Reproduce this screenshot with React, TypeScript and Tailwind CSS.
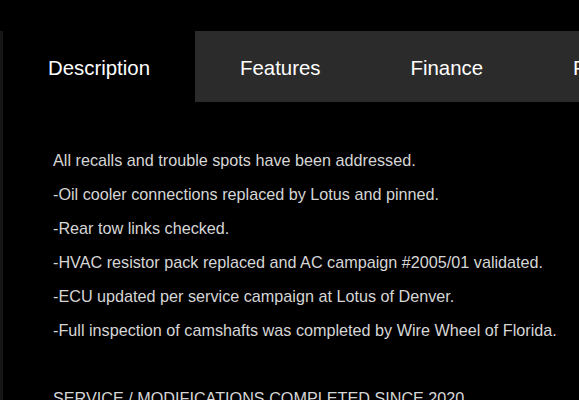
const tabs = ['Description', 'Features', 'Finance', 'FAQ'];

const lines = [
  'All recalls and trouble spots have been addressed.',
  '-Oil cooler connections replaced by Lotus and pinned.',
  '-Rear tow links checked.',
  '-HVAC resistor pack replaced and AC campaign #2005/01 validated.',
  '-ECU updated per service campaign at Lotus of Denver.',
  '-Full inspection of camshafts was completed by Wire Wheel of Florida.',
];

export default function App() {
  return (
    <div className="w-[579px] h-[400px] overflow-hidden bg-black font-['Liberation_Sans',Arial,sans-serif]">
      <div className="h-[31px]" />
      <div className="border-l-[3px] border-[#161616]">
        <nav className="flex h-[71px] whitespace-nowrap">
          {tabs.map((t, i) => (
            <div
              key={t}
              className={
                'flex items-center shrink-0 text-[20.4px] text-white px-[45px] pt-[3px] ' +
                (i === 0 ? 'bg-black' : 'bg-[#2b2b2b]')
              }
            >
              {t}
            </div>
          ))}
        </nav>
        <div className="pl-[50px] pt-[41px] text-[16.2px] leading-[34px] text-[#d6d6d6]">
          {lines.map((l) => (
            <p key={l}>{l}</p>
          ))}
          <p>&nbsp;</p>
          <p>SERVICE / MODIFICATIONS COMPLETED SINCE 2020</p>
        </div>
      </div>
    </div>
  );
}
